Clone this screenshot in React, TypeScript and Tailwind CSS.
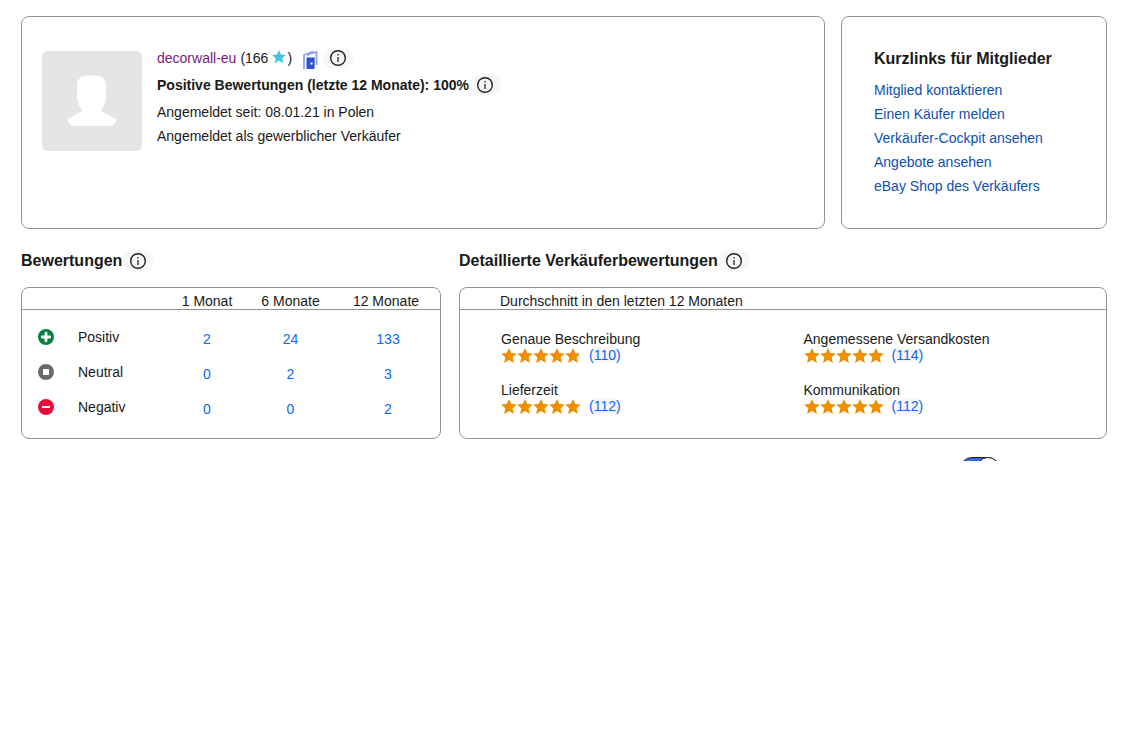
import React, { useState } from 'react';

const quickLinks = [
  'Mitglied kontaktieren',
  'Einen Käufer melden',
  'Verkäufer-Cockpit ansehen',
  'Angebote ansehen',
  'eBay Shop des Verkäufers',
];

type Kind = 'positive' | 'neutral' | 'negative';

const feedback: { kind: Kind; label: string; counts: number[] }[] = [
  { kind: 'positive', label: 'Positiv', counts: [2, 24, 133] },
  { kind: 'neutral', label: 'Neutral', counts: [0, 2, 3] },
  { kind: 'negative', label: 'Negativ', counts: [0, 0, 2] },
];

const detailed = [
  { label: 'Genaue Beschreibung', count: 110, rating: 4.8 },
  { label: 'Angemessene Versandkosten', count: 114, rating: 5 },
  { label: 'Lieferzeit', count: 112, rating: 5 },
  { label: 'Kommunikation', count: 112, rating: 5 },
];

const InfoButton: React.FC<{ label: string }> = ({ label }) => (
  <button
    type="button"
    aria-label={label}
    className="flex h-5 w-8 shrink-0 items-center justify-center rounded-full bg-[#f7f7f7]"
  >
    <svg width="16" height="16" viewBox="0 0 16 16" fill="none">
      <circle cx="8" cy="8" r="7.3" stroke="#222" strokeWidth="1.4" />
      <rect x="7.3" y="4" width="1.4" height="1.5" fill="#333" />
      <rect x="7.3" y="7" width="1.4" height="5" fill="#333" />
    </svg>
  </button>
);

const Avatar: React.FC = () => (
  <svg width="100" height="100" viewBox="0 0 100 100" className="shrink-0">
    <rect width="100" height="100" rx="6" fill="#e5e5e5" />
    <path
      d="M44 24.500h11c5 .5 9 4 9 9.500v12c0 5.500-3 10-5.500 13.500L75 68.500c-1.500 3-3 5.500-5.500 6.500h-39c-2.500-1-4-3.500-5.500-6.500L41 59.500C38 56 35 51.500 35 46V34c0-5.500 4-9 9-9.500z"
      fill="#fff"
    />
  </svg>
);

const ShopIcon: React.FC = () => (
  <svg width="15" height="20" viewBox="0 0 15 20" className="mt-1 shrink-0">
    <path d="M1 19V5l9-3.500M5 6V4.500L13.500 2v13" fill="none" stroke="#8fa4e8" strokeWidth="1.800" />
    <path d="M3.500 7.500h7.500V19H3.500z" fill="#2a50cf" />
    <path d="M11 7.500l.8-.8V18l-.8 1z" fill="#5c78da" />
    <path d="M7.500 12.500h2v2h-2z" fill="#fff" />
  </svg>
);

const KindIcon: React.FC<{ kind: Kind }> = ({ kind }) => (
  <svg width="16" height="16" viewBox="0 0 16 16">
    {kind === 'positive' && (
      <>
        <circle cx="8" cy="8" r="8" fill="#05823f" />
        <path d="M8 4.200v7.600M4.200 8h7.600" stroke="#fff" strokeWidth="2.800" strokeLinecap="round" />
      </>
    )}
    {kind === 'neutral' && (
      <>
        <circle cx="8" cy="8" r="8" fill="#6b6b6b" />
        <rect x="5" y="5" width="6" height="6" rx="0.500" fill="#fff" />
      </>
    )}
    {kind === 'negative' && (
      <>
        <circle cx="8" cy="8" r="8" fill="#e0103a" />
        <rect x="4" y="7" width="8" height="2" fill="#fff" />
      </>
    )}
  </svg>
);

const STAR = 'M8 0l2.300 5.100 5.500.5-4.100 3.700 1.200 5.700L8 12.100 3.100 15l1.200-5.700L.2 5.600l5.500-.5z';

const Stars: React.FC<{ rating: number }> = ({ rating }) => (
  <div className="w-20 shrink-0">
    <div className="overflow-hidden" style={{ width: `${(rating / 5) * 100 + (rating < 5 ? 2 : 0)}%` }}>
      <svg width="80" height="16" viewBox="0 0 80 16" role="img" aria-label={`${rating} von 5`}>
        {[0, 16, 32, 48, 64].map(x => (
          <path key={x} d={STAR} transform={`translate(${x} 1)`} fill="#f18e00" />
        ))}
      </svg>
    </div>
  </div>
);

const ProfileCard: React.FC = () => (
  <section className="flex min-h-[213px] min-w-0 flex-1 items-start gap-[15px] rounded-lg border border-[#949494] px-5 pt-[34px] pb-8">
    <Avatar />
    <div className="min-w-0">
      <div className="flex h-3.5 items-center">
        <a href="#" className="text-[#7b1978]">decorwall-eu</a>
        <span className="ml-1">(166</span>
        <svg width="14" height="14" viewBox="0 0 16 16" className="mr-px mb-0.5 ml-1">
          <path d={STAR} fill="#3ec6dc" />
        </svg>
        <span className="mr-[11px]">)</span>
        <ShopIcon />
        <div className="ml-1">
          <InfoButton label="Informationen zum Mitglied" />
        </div>
      </div>
      <div className="mt-2.5 flex h-5 items-center font-bold">
        Positive Bewertungen (letzte 12 Monate): 100%
        <InfoButton label="Informationen zu positiven Bewertungen" />
      </div>
      <p className="mt-[5px] leading-6">Angemeldet seit: 08.01.21 in Polen</p>
      <p className="leading-6">Angemeldet als gewerblicher Verkäufer</p>
    </div>
  </section>
);

const QuickLinksCard: React.FC = () => (
  <nav className="w-[266px] shrink-0 rounded-lg border border-[#949494] px-8 pt-[30px]">
    <h2 className="text-base font-bold">Kurzlinks für Mitglieder</h2>
    <ul className="mt-[7px] leading-6">
      {quickLinks.map(link => (
        <li key={link}>
          <a href="#" className="text-[#0d50b0]">{link}</a>
        </li>
      ))}
    </ul>
  </nav>
);

const FeedbackTable: React.FC = () => (
  <section className="w-[420px] shrink-0">
    <div className="flex h-6 items-center">
      <h2 className="text-base font-bold">Bewertungen</h2>
      <InfoButton label="Informationen zu Bewertungen" />
    </div>
    <div className="mt-3.5 h-[152px] rounded-lg border border-[#949494]">
      <table className="w-full table-fixed">
        <colgroup>
          <col className="w-[143px]" />
          <col className="w-[84px]" />
          <col className="w-[83px]" />
          <col />
        </colgroup>
        <thead>
          <tr className="h-[21px] border-b border-[#949494] align-bottom leading-4">
            <td></td>
            <th className="font-normal">1 Monat</th>
            <th className="font-normal">6 Monate</th>
            <th className="font-normal">12 Monate</th>
          </tr>
        </thead>
        <tbody>
          <tr className="h-2.5"><td colSpan={4}></td></tr>
          {feedback.map(row => (
            <tr key={row.kind} className="h-[35px]">
              <th className="font-normal">
                <div className="flex items-center gap-6 pl-4">
                  <KindIcon kind={row.kind} />
                  {row.label}
                </div>
              </th>
              {row.counts.map((count, i) => (
                <td key={i} className="pt-1 text-center last:pl-1">
                  <a href="#" className="text-[#0968f6]">{count}</a>
                </td>
              ))}
            </tr>
          ))}
        </tbody>
      </table>
    </div>
  </section>
);

const DetailedRatings: React.FC = () => (
  <section className="min-w-0 flex-1">
    <div className="flex h-6 items-center">
      <h2 className="text-base font-bold">Detaillierte Verkäuferbewertungen</h2>
      <InfoButton label="Informationen zu detaillierten Bewertungen" />
    </div>
    <div className="mt-3.5 h-[152px] rounded-lg border border-[#949494]">
      <div className="flex h-[22px] items-end border-b border-[#949494] pl-10 leading-4">
        Durchschnitt in den letzten 12 Monaten
      </div>
      <dl className="grid grid-cols-2 gap-y-[19px] pt-[21px] pl-[41px] leading-4">
        {detailed.map(item => (
          <div key={item.label}>
            <dt>{item.label}</dt>
            <dd className="flex h-4 items-center gap-2">
              <Stars rating={item.rating} />
              <a href="#" className="rounded-full bg-[#f7f7f7] text-[#0968f6]">({item.count})</a>
            </dd>
          </div>
        ))}
      </dl>
    </div>
  </section>
);

export default function App() {
  const [enabled, setEnabled] = useState(true);

  return (
    <main className="bg-white pt-4 pr-[39px] pl-[21px] font-['Liberation_Sans',Arial,sans-serif] text-sm text-[#191919]">
      <div className="flex gap-4">
        <ProfileCard />
        <QuickLinksCard />
      </div>
      <div className="mt-5 flex gap-[18px]">
        <FeedbackTable />
        <DetailedRatings />
      </div>
      {/* only the top edge of the switch shows */}
      <div className="mt-[18px] flex h-1 items-start justify-end overflow-hidden pr-[107px]">
        <button
          type="button"
          role="switch"
          aria-checked={enabled}
          aria-label="Filter"
          onClick={() => setEnabled(!enabled)}
          className={`flex h-6 w-10 shrink-0 rounded-full border border-[#191919] ${enabled ? 'justify-end bg-[#3665f3]' : 'bg-[#8f8f8f]'}`}
        >
          <span className="-m-px size-6 rounded-full border border-[#191919] bg-white"></span>
        </button>
      </div>
    </main>
  );
}
